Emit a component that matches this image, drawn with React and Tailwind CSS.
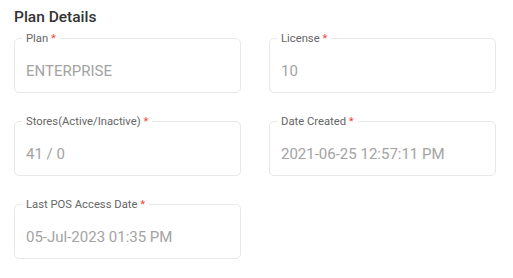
export default function App() {
  const fields = [
    { label: "Plan", value: "ENTERPRISE" },
    { label: "License", value: "10" },
    { label: "Stores(Active/Inactive)", value: "41 / 0" },
    { label: "Date Created", value: "2021-06-25 12:57:11 PM" },
    { label: "Last POS Access Date", value: "05-Jul-2023 01:35 PM" },
  ];
  return (
    <div
      className="w-[513px] h-[278px] bg-white pl-[14px] pr-[17px] pt-[7px]"
      style={{ fontFamily: "Roboto, 'Liberation Sans', sans-serif" }}
    >
      <h2 className="text-[15.5px] leading-[20px] font-medium text-[#333]">Plan Details</h2>
      <div className="grid grid-cols-2 gap-x-[28px] gap-y-[28px] mt-[11px]">
        {fields.map((f) => (
          <div
            key={f.label}
            className="relative h-[55px] rounded-[5px] border border-[#e8e8e8] pl-[11px] pt-[20px]"
          >
            <div className="absolute left-[7px] top-[-7px] bg-white px-[4px] text-[11.25px] leading-[14px] text-[#666]">
              {f.label} <span className="text-[#f44336]">*</span>
            </div>
            <div className="text-[15px] leading-[24px] text-[#a3a3a3]">{f.value}</div>
          </div>
        ))}
      </div>
    </div>
  );
}
